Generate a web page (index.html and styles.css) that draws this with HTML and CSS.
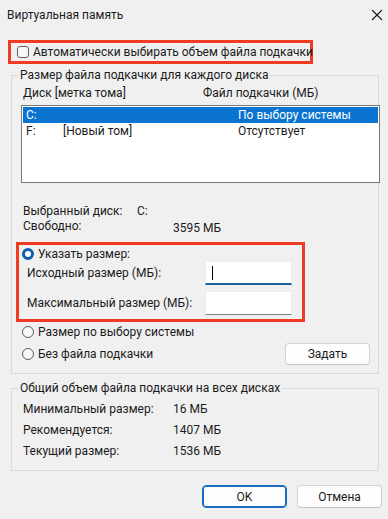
FILE: index.html
```html
<!DOCTYPE html>
<html lang="ru">
<head>
  <meta charset="UTF-8">
  <title>Виртуальная память</title>
  <link rel="stylesheet" href="styles.css">
</head>
<body>
  <div class="titlebar">
    <span class="title">Виртуальная память</span>
    <svg class="close" width="12" height="12" viewBox="0 0 12 12">
      <path d="M1 1 L11 11 M11 1 L1 11" stroke="#1b1b1b" stroke-width="1.1" fill="none"/>
    </svg>
  </div>

  <div class="auto-box">
    <span class="checkbox"></span>
    <span>Автоматически выбирать объем файла подкачки</span>
  </div>

  <fieldset class="group group-disks">
    <legend>Размер файла подкачки для каждого диска</legend>

    <div class="cols">
      <span>Диск [метка тома]</span>
      <span>Файл подкачки (МБ)</span>
    </div>

    <div class="drive-list">
      <div class="drive selected">
        <span>C:</span>
        <span></span>
        <span>По выбору системы</span>
      </div>
      <div class="drive">
        <span>F:</span>
        <span>[Новый том]</span>
        <span>Отсутствует</span>
      </div>
    </div>

    <div class="info">
      <div class="info-row"><span class="info-label">Выбранный диск:</span><span>C:</span></div>
      <div class="info-row free"><span class="info-label wide">Свободно:</span><span class="free-val">3595 МБ</span></div>
    </div>

    <div class="custom-box">
      <div class="radio-row first">
        <span class="radio checked"></span>
        <span>Указать размер:</span>
      </div>
      <div class="size-row">
        <span class="size-label">Исходный размер (МБ):</span>
        <span class="textbox focused"><span class="caret"></span></span>
      </div>
      <div class="size-row second">
        <span class="size-label">Максимальный размер (МБ):</span>
        <span class="textbox"></span>
      </div>
    </div>

    <div class="radio-row sys">
      <span class="radio"></span>
      <span>Размер по выбору системы</span>
    </div>
    <div class="radio-row none">
      <span class="radio"></span>
      <span>Без файла подкачки</span>
      <button class="btn set-btn">Задать</button>
    </div>
  </fieldset>

  <fieldset class="group group-total">
    <legend>Общий объем файла подкачки на всех дисках</legend>
    <div class="total-row"><span class="total-label">Минимальный размер:</span><span>16 МБ</span></div>
    <div class="total-row"><span class="total-label">Рекомендуется:</span><span>1407 МБ</span></div>
    <div class="total-row"><span class="total-label">Текущий размер:</span><span>1536 МБ</span></div>
  </fieldset>

  <div class="actions">
    <button class="btn primary">OK</button>
    <button class="btn">Отмена</button>
  </div>
</body>
</html>
```

FILE: styles.css
```css
body {
  margin: 0;
  background: #f0f0f0;
  font-family: Roboto, "Noto Sans", sans-serif;
  font-size: 12px;
  line-height: 16px;
  color: #1b1b1b;
  width: 388px;
  height: 519px;
  overflow: hidden;
}

.titlebar {
  height: 30px;
  display: flex;
  align-items: center;
  padding-left: 7px;
  padding-right: 5px;
  margin-bottom: 10px;
}

.titlebar .close {
  margin-left: auto;
}

.auto-box {
  box-sizing: border-box;
  margin-left: 8px;
  width: 305px;
  height: 24px;
  border: 3px solid #ef3b24;
  display: flex;
  align-items: center;
  padding-left: 6px;
  gap: 4px;
  white-space: nowrap;
}

.checkbox {
  box-sizing: border-box;
  width: 12px;
  height: 12px;
  border: 1px solid #5d5d5d;
  border-radius: 3px;
  background: #f7f7f7;
  flex-shrink: 0;
}

.group {
  margin: 3px 9px 0 11px;
  padding: 0 0 8px 9px;
  border: 1px solid #dadada;
  min-width: 0;
}

.group legend {
  margin-left: -3px;
  padding: 0 2px;
  line-height: 16px;
}

.cols {
  margin-top: 2px;
  padding-left: 2px;
  display: grid;
  grid-template-columns: 180px 1fr;
}

.drive-list {
  box-sizing: border-box;
  margin-top: 4px;
  width: 359px;
  height: 78px;
  border: 1px solid #7a7a7a;
  background: #fff;
  padding: 1px 1px 0;
}

.drive {
  display: grid;
  grid-template-columns: 37px 175px 1fr;
  padding-left: 3px;
  height: 16px;
}

.drive.selected {
  background: #0a74d0;
  color: #fff;
}

.info {
  margin-top: 21px;
  padding-left: 2px;
}

.info-row {
  display: flex;
  line-height: 15px;
}

.info-label {
  width: 114px;
}

.info-label.wide {
  width: 150px;
}

.free-val {
  padding-top: 2px;
}

.custom-box {
  box-sizing: border-box;
  margin: 6px 0 0 -5px;
  width: 289px;
  border: 3px solid #ef3b24;
  padding: 1px 0 4px;
}

.radio-row {
  display: flex;
  align-items: center;
  gap: 4px;
  padding-left: 3px;
  height: 16px;
}

.radio-row.first {
  height: 15px;
}

.radio {
  box-sizing: border-box;
  width: 12px;
  height: 12px;
  border-radius: 50%;
  border: 1px solid #5d5d5d;
  background: #f7f7f7;
}

.radio.checked {
  border: 3.5px solid #0f5fb0;
  background: #fff;
}

.size-row {
  display: flex;
  align-items: center;
  padding-left: 8px;
}

.size-row.second {
  margin-top: 6px;
}

.size-label {
  width: 178px;
}

.textbox {
  box-sizing: border-box;
  width: 87px;
  height: 24px;
  background: #fff;
  border: 1px solid #ececec;
  border-bottom: 1px solid #878787;
  display: flex;
  align-items: center;
  padding-left: 6px;
}

.textbox.focused {
  border-bottom: 2px solid #17609a;
}

.caret {
  width: 1px;
  height: 14px;
  background: #000;
}

.radio-row.sys {
  margin-top: 2px;
  padding-left: 1px;
}

.radio-row.none {
  margin-top: 3px;
  height: 22px;
  padding-left: 1px;
}

.btn {
  box-sizing: border-box;
  font-family: inherit;
  font-size: 12px;
  color: #1b1b1b;
  background: #fdfdfd;
  border: 1px solid #d3d3d3;
  border-bottom-color: #c2c2c2;
  border-radius: 4px;
  width: 85px;
  height: 23px;
  padding: 0;
}

.set-btn {
  margin-left: auto;
  margin-right: 8px;
  height: 22px;
}

.group-total {
  margin-top: 6px;
  padding-bottom: 8px;
}

.total-row {
  display: flex;
  height: 21px;
  line-height: 21px;
  padding-left: 2px;
}

.total-row:first-of-type {
  margin-top: 3px;
}

.total-label {
  width: 150px;
}

.actions {
  display: flex;
  justify-content: flex-end;
  gap: 10px;
  margin-top: 14px;
  padding-right: 6px;
}

.btn.primary {
  border: 1px solid #1a6cc0;
  box-shadow: inset 0 0 0 1px #1a6cc0;
}
```
